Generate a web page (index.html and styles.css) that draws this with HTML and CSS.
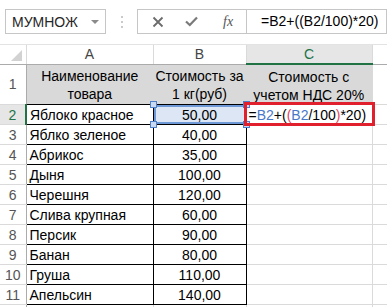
FILE: index.html
```html
<!DOCTYPE html>
<html>
<head>
<meta charset="utf-8">
<link rel="stylesheet" href="styles.css">
</head>
<body>
<div class="fbar">
  <div class="namebox"><span class="nb-text">МУМНОЖ</span><span class="nb-arrow"></span></div>
  <div class="grip">
    <svg width="4" height="14" viewBox="0 0 4 14"><circle cx="2" cy="2" r="1" fill="#b8b8b8"/><circle cx="2" cy="7" r="1" fill="#b8b8b8"/><circle cx="2" cy="12" r="1" fill="#b8b8b8"/></svg>
  </div>
  <div class="btns">
    <svg class="ico-x" width="12" height="12" viewBox="0 0 12 12"><path d="M1.5 1.5 L10.5 10.5 M10.5 1.5 L1.5 10.5" stroke="#6b6b6b" stroke-width="1.8" fill="none"/></svg>
    <svg class="ico-ok" width="13" height="11" viewBox="0 0 13 11"><path d="M1 5.5 L4.8 9 L12 1.5" stroke="#7a7a7a" stroke-width="2.2" fill="none"/></svg>
    <span class="fx">fx</span>
  </div>
  <div class="finput">=B2+((B2/100)*20)</div>
</div>
<table class="sheet">
  <colgroup>
    <col class="c-rh"><col class="c-a"><col class="c-b"><col class="c-c"><col class="c-d">
  </colgroup>
  <tr class="hdr">
    <th class="corner"><span class="tri"></span></th>
    <th class="ch">A</th>
    <th class="ch">B</th>
    <th class="ch sel">C</th>
    <th class="ch last"></th>
  </tr>
  <tr class="r1">
    <th class="rh">1</th>
    <td class="head">Наименование<br>товара</td>
    <td class="head">Стоимость за<br>1 кг(руб)</td>
    <td class="head">Стоимость с<br>учетом НДС 20%</td>
    <td class="grid"></td>
  </tr>
  <tr class="row">
    <th class="rh sel">2</th>
    <td class="name">Яблоко красное</td>
    <td class="num ref">50,00<span class="hd tl"></span><span class="hd tr"></span><span class="hd bl"></span><span class="hd br"></span></td>
    <td class="grid edit"><span class="op">=</span><span class="rf">B2</span><span class="op">+(</span><span class="pr">(</span><span class="rf">B2</span><span class="op">/100</span><span class="pr">)</span><span class="op">*20)</span><span class="mark"></span></td>
    <td class="grid"></td>
  </tr>
  <tr class="row"><th class="rh">3</th><td class="name">Яблко зеленое</td><td class="num">40,00</td><td class="grid"></td><td class="grid"></td></tr>
  <tr class="row"><th class="rh">4</th><td class="name">Абрикос</td><td class="num">35,00</td><td class="grid"></td><td class="grid"></td></tr>
  <tr class="row"><th class="rh">5</th><td class="name">Дыня</td><td class="num">100,00</td><td class="grid"></td><td class="grid"></td></tr>
  <tr class="row"><th class="rh">6</th><td class="name">Черешня</td><td class="num">120,00</td><td class="grid"></td><td class="grid"></td></tr>
  <tr class="row"><th class="rh">7</th><td class="name">Слива крупная</td><td class="num">60,00</td><td class="grid"></td><td class="grid"></td></tr>
  <tr class="row"><th class="rh">8</th><td class="name">Персик</td><td class="num">90,00</td><td class="grid"></td><td class="grid"></td></tr>
  <tr class="row"><th class="rh">9</th><td class="name">Банан</td><td class="num">80,00</td><td class="grid"></td><td class="grid"></td></tr>
  <tr class="row"><th class="rh">10</th><td class="name">Груша</td><td class="num">110,00</td><td class="grid"></td><td class="grid"></td></tr>
  <tr class="row"><th class="rh">11</th><td class="name">Апельсин</td><td class="num">140,00</td><td class="grid"></td><td class="grid"></td></tr>
  <tr class="row"><th class="rh"></th><td class="grid"></td><td class="grid"></td><td class="grid"></td><td class="grid"></td></tr>
</table>
</body>
</html>
```

FILE: styles.css
```css
html, body {
  margin: 0;
  padding: 0;
  background: #ffffff;
  overflow: hidden;
}
body {
  width: 387px;
  height: 307px;
  font-family: "Liberation Sans", Arial, sans-serif;
  color: #000;
}
.fbar {
  height: 45px;
  display: flex;
  align-items: flex-start;
  padding-top: 9px;
  box-sizing: border-box;
  border-bottom: 1px solid #e3e3e3;
}
.namebox {
  margin-left: 5px;
  width: 101px;
  height: 25px;
  box-sizing: border-box;
  border: 1px solid #c6c6c6;
  display: flex;
  align-items: center;
  justify-content: space-between;
  padding: 0 6px 0 6px;
}
.nb-text {
  font-size: 14px;
  color: #262626;
}
.nb-arrow {
  width: 0;
  height: 0;
  border-left: 4px solid transparent;
  border-right: 4px solid transparent;
  border-top: 4px solid #8a8a8a;
}
.grip {
  width: 31px;
  height: 25px;
  display: flex;
  align-items: center;
  justify-content: center;
}
.btns {
  width: 110px;
  height: 25px;
  box-sizing: border-box;
  border: 1px solid #c6c6c6;
  display: flex;
  align-items: center;
  padding-left: 14px;
}
.ico-x { margin-right: 21px; }
.ico-ok { margin-right: 25px; }
.fx {
  font-family: "Liberation Serif", "Times New Roman", serif;
  font-style: italic;
  font-size: 14px;
  color: #555;
}
.finput {
  flex: 1;
  height: 25px;
  box-sizing: border-box;
  border: 1px solid #c6c6c6;
  border-left: none;
  font-size: 14px;
  line-height: 23px;
  padding-left: 14px;
  color: #000;
  white-space: nowrap;
  overflow: hidden;
}
.sheet {
  border-collapse: collapse;
  table-layout: fixed;
  width: 400px;
  font-size: 14px;
}
.c-rh { width: 26px; }
.c-a { width: 127px; }
.c-b { width: 93px; }
.c-c { width: 126px; }
.c-d { width: 28px; }
th, td {
  padding: 0;
  white-space: nowrap;
  overflow: visible;
}
.hdr th {
  height: 18px;
  font-weight: normal;
  color: #444;
  text-align: center;
  border-right: 1px solid #dadada;
  border-bottom: 1px solid #ababab;
  background: #fff;
  font-size: 14px;
}
.hdr th.sel {
  color: #217346;
  background: #e6e6e6;
  border-bottom: 2px solid #217346;
}
.corner {
  position: relative;
}
.tri {
  position: absolute;
  right: 4px;
  bottom: 3px;
  width: 0;
  height: 0;
  border-left: 11px solid transparent;
  border-bottom: 11px solid #d2d2d2;
}
.rh {
  font-weight: normal;
  color: #555;
  text-align: center;
  border-right: 1px solid #ababab;
  border-bottom: 1px solid #dadada;
  background: #fff;
  font-size: 14px;
}
.rh.sel {
  color: #217346;
  background: #e6e6e6;
  border-right: 2px solid #217346;
}
.r1 th, .r1 td { height: 37px; }
.row th, .row td { height: 19px; }
.r1 td.head {
  background: #d9d9d9;
  text-align: center;
  line-height: 18px;
  padding-top: 2px;
  border-bottom: 1px solid #000;
}
td.grid {
  border: 1px solid #dadada;
}
td.name {
  border: 1px solid #000;
  padding-left: 3px;
}
td.num {
  border: 1px solid #000;
  text-align: center;
}
td.ref {
  position: relative;
  background: #dce6f4;
  box-shadow: inset 0 0 0 2px #6f98d6;
}
.hd {
  position: absolute;
  width: 5px;
  height: 5px;
  background: #c9d9f2;
  border: 1px solid #4f7fc9;
}
.hd.tl { left: -4px; top: -4px; }
.hd.tr { right: -4px; top: -4px; }
.hd.bl { left: -4px; bottom: -4px; }
.hd.br { right: -4px; bottom: -4px; }
td.edit {
  position: relative;
  padding-left: 2px;
}
.op { color: #000; }
.rf { color: #4a78c8; }
.pr { color: #e2475f; }
.mark {
  position: absolute;
  left: -3px;
  top: -3px;
  right: -3px;
  bottom: -2px;
  border: 3px solid #e0202c;
}
```
